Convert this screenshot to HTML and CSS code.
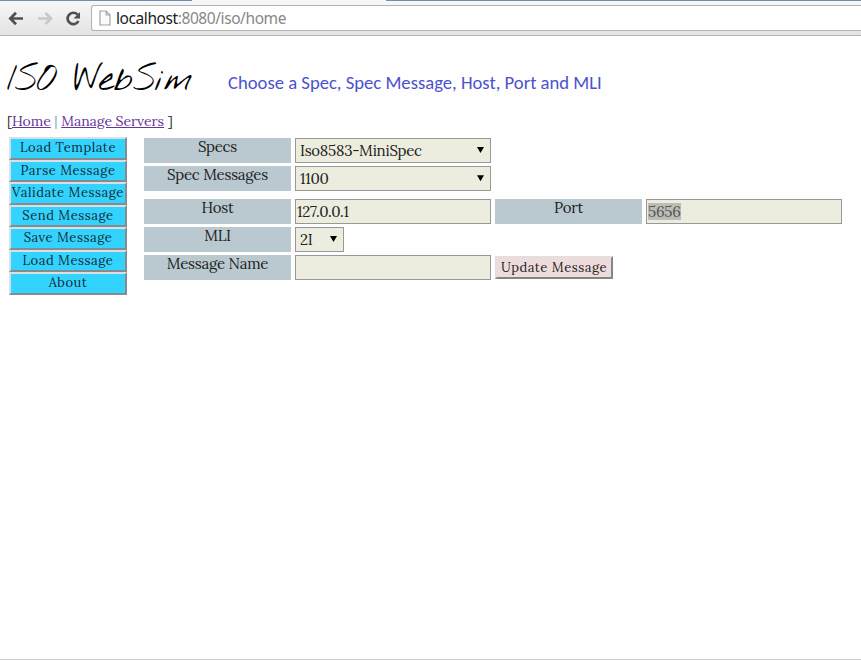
FILE: index.html
```
<!DOCTYPE html>
<html lang="en">
<head>
<meta charset="utf-8">
<title>ISO WebSim</title>
<link rel="stylesheet" href="styles.css">
</head>
<body>
<div class="browser">
  <div class="tabs"><span class="tab"></span></div>
  <svg class="nav" width="91" height="32" viewBox="0 0 91 32" fill="none">
    <path d="M10 14.5H23M16 8.8L10.3 14.5L16 20.2" stroke="#505050" stroke-width="2.7"/>
    <path d="M38 14.5H51M45.5 9L51 14.5L45.5 20" stroke="#c8c8c8" stroke-width="2.6"/>
    <path d="M77.5 10.6A5.7 5.7 0 1 0 78.4 17" stroke="#505050" stroke-width="2.7"/>
    <path d="M80 8V14.5H73.5Z" fill="#505050"/>
  </svg>
  <div class="address">
    <svg width="12" height="16" viewBox="0 0 12 16"><path d="M1 1H7.2L11 5V15H1ZM7.2 1V5H11" fill="#fafafa" stroke="#a3a3a3" stroke-width="1.2"/></svg>
    <span class="url">localhost<span class="path">:8080/iso/home</span></span>
  </div>
</div>
<main class="page">
  <header class="heading">
    <h1 class="logo">ISO WebSim</h1>
    <p class="hint">Choose a Spec, Spec Message, Host, Port and MLI</p>
  </header>
  <nav class="links">[<a href="#">Home</a> <span class="bar">|</span> <a href="#">Manage Servers</a> ]</nav>
  <div class="content">
    <div class="menu">
      <button>Load Template</button>
      <button>Parse Message</button>
      <button>Validate Message</button>
      <button>Send Message</button>
      <button>Save Message</button>
      <button>Load Message</button>
      <button>About</button>
    </div>
    <div class="form">
      <div class="row"><div class="label">Specs</div><div class="field select"><span>Iso8583-MiniSpec</span><i class="arrow"></i></div></div>
      <div class="row group-end"><div class="label">Spec Messages</div><div class="field select"><span>1100</span><i class="arrow"></i></div></div>
      <div class="row"><div class="label">Host</div><div class="field">127.0.0.1</div><div class="label">Port</div><div class="field"><span class="selected">5656</span></div></div>
      <div class="row"><div class="label">MLI</div><div class="field select small"><span>2I</span><i class="arrow"></i></div></div>
      <div class="row"><div class="label">Message Name</div><div class="field"></div><button class="update">Update Message</button></div>
    </div>
  </div>
</main>
</body>
</html>
```
FILE: styles.css
```
* { box-sizing: border-box; }
body {
  margin: 0;
  height: 660px;
  overflow: hidden;
  display: flex;
  flex-direction: column;
  background: #fefefe;
  color: #222;
  font: 15px/20px Lora, "Liberation Serif", serif;
  letter-spacing: -.25px;
  border-bottom: 1px solid #cfcfcf;
}
.browser {
  height: 36px;
  flex: none;
  display: grid;
  grid-template: 5px 30px / 91px 1fr;
  background: linear-gradient(#f8f8f8, #e3e3e3);
  border-bottom: 1px solid #b3b3b3;
}
.tabs { grid-column: 1 / 3; height: 1px; background: #738cb5; }
.tab { display: block; width: 194px; height: 1px; margin-left: 192px; background: #f7f7f7; }
.nav { margin-top: -1px; }
.address {
  height: 26px;
  display: flex;
  align-items: center;
  gap: 6px;
  padding-left: 7px;
  background: #fff;
  border: 1px solid #b3b3b3;
  border-right: 0;
  border-radius: 3px 0 0 3px;
}
.url { font: 15.5px/22px "Noto Sans", sans-serif; color: #222; letter-spacing: -.42px; margin-left: -1px; }
.path { color: #888; }
.page { padding: 24px 0 0 7px; }
.heading { display: flex; height: 50px; }
.logo {
  width: 220px;
  margin: 0;
  color: #000;
  font: 400 36px/40px "Nothing You Could Do", "Shadows Into Light", "Indie Flower", "Gloria Hallelujah", "Patrick Hand", Caveat, "Comic Neue", "Permanent Marker", "Architects Daughter", Kalam, "Comic Sans MS", cursive;
  letter-spacing: 0;
  white-space: nowrap;
}
.hint { margin: 13px 0 0 1px; font: 18.65px/20px Carlito, Lato, sans-serif; letter-spacing: 0; color: #4b52ce; white-space: nowrap; }
.links { height: 20px; padding-top: 1px; font-size: 14px; letter-spacing: -.05px; }
.links a { color: #663399; }
.bar { color: #7d9db5; }
.content { display: flex; align-items: flex-start; margin-top: 8px; }
.menu { width: 118px; margin: -1px 17px 0 2px; display: grid; grid-auto-rows: 22.5px; }
button {
  padding: 0;
  font: 13px/18px Lora, "Liberation Serif", serif;
  letter-spacing: .5px;
  color: #142a33;
  background: #33d3ff;
  border: 2px solid;
  border-color: #d9dfe2 #858b8f #858b8f #d9dfe2;
  white-space: nowrap;
}
.form { display: grid; row-gap: 3.3px; }
.row { display: flex; gap: 4px; height: 25px; }
.group-end { margin-bottom: 4px; }
.label { width: 147px; text-align: center; line-height: 18px; background: #bac9d0; }
.field {
  width: 196px;
  padding: 0 0 0 1px;
  line-height: 24px;
  background: #ecedde;
  border: 1px solid #989898;
}
.select { display: flex; justify-content: space-between; padding: 0 6px 0 4px; }
.small { width: 49px; }
.arrow { width: 7px; height: 6px; margin-top: 8px; background: #000; clip-path: polygon(0 0, 100% 0, 50% 100%); }
.selected { display: inline-block; line-height: 17px; background: #bcbdb6; color: #555; }
.update { width: 118px; height: 23px; margin-top: 1px; color: #222; background: #eedcdc; border-color: #e5dede #858585 #858585 #e5dede; }
```
